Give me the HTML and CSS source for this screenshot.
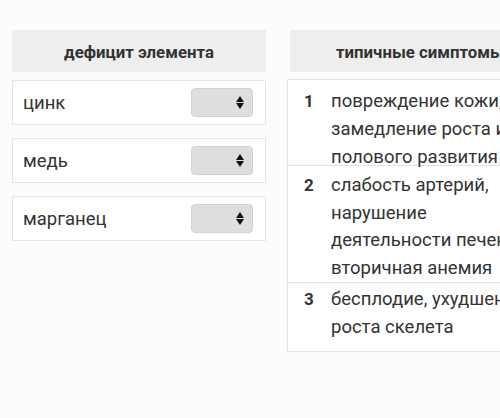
FILE: index.html
```html
<!DOCTYPE html>
<html>
<head>
    <title>Дефицит элементов</title>
    <link rel="stylesheet" href="styles.css">
</head>
<body>
    <div class="board">
        <div class="column">
            <div class="column-head">дефицит элемента</div>
            <div class="element-row">
                <span class="element-name">цинк</span>
                <span class="picker"><span class="arrows"></span></span>
            </div>
            <div class="element-row">
                <span class="element-name">медь</span>
                <span class="picker"><span class="arrows"></span></span>
            </div>
            <div class="element-row">
                <span class="element-name">марганец</span>
                <span class="picker"><span class="arrows"></span></span>
            </div>
        </div>

        <div class="column">
            <div class="column-head wide">типичные симптомы</div>
            <div class="symptom first">
                <span class="num">1</span>
                <span class="text">повреждение кожи,<br>замедление роста и<br>полового развития</span>
            </div>
            <div class="symptom">
                <span class="num">2</span>
                <span class="text">слабость артерий,<br>нарушение<br>деятельности печени,<br>вторичная анемия</span>
            </div>
            <div class="symptom last">
                <span class="num">3</span>
                <span class="text">бесплодие, ухудшение<br>роста скелета</span>
            </div>
        </div>
    </div>
</body>
</html>
```

FILE: styles.css
```css
body {
    margin: 0;
    background-color: #fcfcfc;
    font-family: Roboto, "Liberation Sans", sans-serif;
    color: #333;
}
.board {
    display: flex;
    gap: 24px;
    padding: 30px 0 0 12px;
    width: 488px;
    height: 388px;
    overflow: hidden;
}
.column {
    width: 254px;
    flex-shrink: 0;
}
.column-head {
    background-color: #eeeeee;
    height: 42px;
    line-height: 44px;
    text-align: center;
    font-size: 16.8px;
    font-weight: bold;
    color: #333;
    margin-bottom: 8px;
}
.column-head.wide {
    padding-left: 6px;
}
.element-row {
    display: flex;
    align-items: center;
    justify-content: space-between;
    height: 43px;
    border: 1px solid #e6e6e6;
    background-color: #fff;
    padding: 0 12px 0 10px;
    margin-bottom: 13px;
    font-size: 18.5px;
}
.picker {
    width: 62px;
    height: 29px;
    background-color: #dedede;
    border: 1px solid #d2d2d2;
    border-radius: 4px;
    display: flex;
    justify-content: flex-end;
    align-items: center;
    padding-right: 8px;
    box-sizing: border-box;
}
.arrows {
    width: 8px;
    height: 13px;
    position: relative;
}
.arrows::before,
.arrows::after {
    content: "";
    position: absolute;
    left: 0;
    border-left: 4px solid transparent;
    border-right: 4px solid transparent;
}
.arrows::before {
    top: 0;
    border-bottom: 6px solid #111;
}
.arrows::after {
    bottom: 0;
    border-top: 6px solid #111;
}
.symptom {
    display: flex;
    border: 1px solid #e3e3e3;
    background-color: #fff;
    padding: 6px 0 0;
    margin-left: -3px;
    margin-top: -1px;
    font-size: 18.5px;
    line-height: 27.5px;
    white-space: nowrap;
}
.symptom.first {
    padding-top: 7px;
    height: 78px;
    line-height: 28px;
}
.symptom.last {
    padding-top: 3px;
    padding-bottom: 10px;
}
.num {
    width: 43px;
    flex-shrink: 0;
    padding-left: 16px;
    box-sizing: border-box;
    font-weight: bold;
    font-size: 17px;
}
```
